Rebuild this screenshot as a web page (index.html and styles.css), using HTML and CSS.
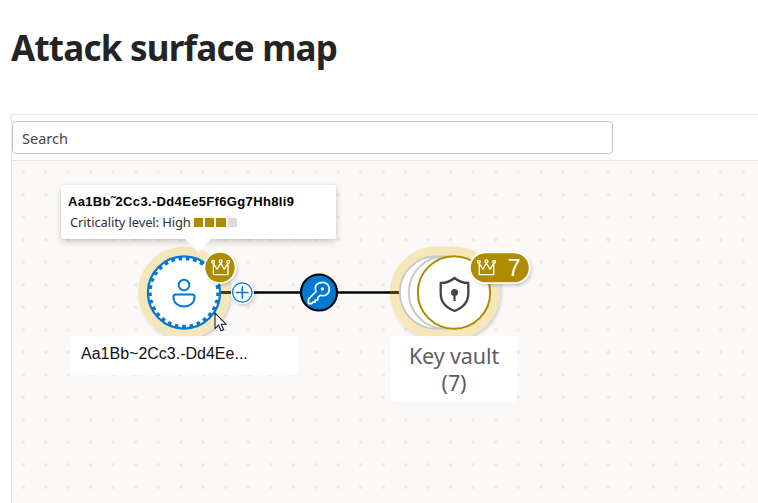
FILE: index.html
```html
<!DOCTYPE html>
<html lang="en">
<head>
<meta charset="utf-8">
<title>Attack surface map</title>
<link rel="stylesheet" href="styles.css">
</head>
<body>
<main class="page">
  <h1 class="title"><span>Attack surface map</span></h1>
  <section class="panel">
    <div class="toolbar"><div class="search"><span>Search</span></div></div>
    <div class="canvas">
      <svg class="graph" width="746" height="342" viewBox="12 161 746 342">
        <defs>
          <filter id="soft" x="-30%" y="-30%" width="160%" height="160%"><feDropShadow dx="1.5" dy="2" stdDeviation="1.5" flood-color="#000" flood-opacity=".18"/></filter>
          <g id="crown" fill="none" stroke="#fff" stroke-width="1.3" stroke-linejoin="round">
            <path d="M-7.3 -4.5V6.800H7.3V-4.5L3.4 1.5L0 -5L-3.4 1.5Z"/>
            <g fill="#ae8c00"><circle cx="-7.6" cy="-6" r="1.4"/><circle cx="0" cy="-6.5" r="1.4"/><circle cx="7.6" cy="-6" r="1.4"/></g>
          </g>
        </defs>
        <circle cx="184" cy="292.5" r="46" fill="#f6e7bb" filter="url(#soft)"/>
        <rect x="390" y="246.500" width="110" height="92" rx="46" fill="#f6e7bb" filter="url(#soft)"/>
        <path d="M221 292.500H400" stroke="#000" stroke-width="2.600"/>
        <path d="M221 292.500H230M390 292.500H399" stroke="#4b3d00" stroke-width="2.600"/>
        <circle cx="184" cy="292.500" r="36.100" fill="#fff" stroke="#0078d4" stroke-width="2.200"/>
        <circle cx="184" cy="292.500" r="34.300" fill="none" stroke="#0078d4" stroke-width="4" pathLength="145" stroke-dasharray="2.500 2.500"/>
        <g fill="none" stroke="#0078d4" stroke-width="1.900">
          <circle cx="184" cy="285" r="5.300"/>
          <path d="M175.700 294.500H192.300Q194.600 294.500 194.600 297C194.600 303 189.500 306.500 184 306.500S173.400 303 173.400 297Q173.400 294.500 175.700 294.500Z"/>
        </g>
        <circle cx="220" cy="267.500" r="16.300" fill="#fff" filter="url(#soft)"/>
        <circle cx="220" cy="267.500" r="14.700" fill="#ae8c00"/>
        <use href="#crown" transform="translate(220.700 267.800)"/>
        <circle cx="242.300" cy="292.500" r="11.500" fill="#fff" filter="url(#soft)"/>
        <circle cx="242.300" cy="292.500" r="9.700" fill="#fff" stroke="#0078d4" stroke-width="1.300"/>
        <path d="M236 292.500H248.600M242.300 286.200V298.800" stroke="#0078d4" stroke-width="1.500"/>
        <circle cx="319" cy="292.500" r="18" fill="#0078d4" stroke="#000" stroke-width="2.200"/>
        <g fill="none" stroke="#fff" stroke-width="1.700" stroke-linejoin="round">
          <path d="M316 291.500C313.500 285 318.500 282.300 322.700 282.300A6.600 6.600 0 0 1 329.300 289C329.300 294.500 324.500 296.700 320.200 295.300L317.800 297.700V300H315.200V302.200H312.800L311.600 303.600H308.500V299.200Z"/>
        </g>
        <circle cx="322.400" cy="289" r="1.700" fill="#fff"/>
        <g fill="#fff" stroke="#c8c8c8" stroke-width="2">
          <circle cx="436" cy="292.500" r="36.200"/><circle cx="445" cy="292.500" r="36.200"/>
          <circle cx="454" cy="292.500" r="36.200" stroke="#ae8c00"/>
        </g>
        <path d="M454.500 278Q460.500 283 468.300 283V293.500C468.300 302 463.500 307.500 454.500 311C445.500 307.500 440.700 302 440.700 293.500V283Q448.500 283 454.500 278Z" fill="none" stroke="#444" stroke-width="2.300" stroke-linejoin="round"/>
        <circle cx="454.500" cy="292.500" r="3.500" fill="#444"/><path d="M454.500 293V301" stroke="#444" stroke-width="2.200"/>
        <rect x="469" y="251.500" width="61.500" height="32.500" rx="16.250" fill="#fff" filter="url(#soft)"/>
        <rect x="470.800" y="253.200" width="58" height="29" rx="14.500" fill="#ae8c00"/>
        <use href="#crown" transform="translate(486.500 267.800)"/>
      </svg>
      <div class="count">7</div>
      <div class="label user"><span>Aa1Bb~2Cc3.-Dd4Ee...</span></div>
      <div class="label vault"><span>Key vault</span><span>(7)</span></div>
      <div class="tip">
        <div class="tip-name"><span>Aa1Bb˜2Cc3.-Dd4Ee5Ff6Gg7Hh8Ii9</span></div>
        <div class="tip-level"><span>Criticality level: High</span><div class="bars"><i></i><i></i><i></i><i class="off"></i></div></div>
      </div>
      <svg class="cursor" width="14" height="21" viewBox="0 0 14 21"><path d="M1 1V16.500L4.600 13.200L7 18.700L9.600 17.600L7.200 12.200H12Z" fill="#fff" stroke="#1a1a2a" stroke-width="1.100"/></svg>
    </div>
  </section>
</main>
</body>
</html>
```
FILE: styles.css
```css
* { box-sizing: border-box; }
body { margin: 0; background: #fff; color: #242424; font-family: "Noto Sans", "Open Sans", sans-serif; overflow: hidden; }
.page { height: 503px; padding-left: 11px; display: flex; flex-direction: column; }
.title { margin: 0; height: 114px; padding-top: 23px; font-size: 35px; line-height: 50px; font-weight: 700; letter-spacing: -.78px; white-space: nowrap; }
.panel { flex: 1; display: flex; flex-direction: column; border: solid #e8e8e8; border-width: 1px 0 0 1px; }
.toolbar { height: 46px; padding-top: 6px; border-bottom: 1px solid #e5e5e5; }
.search { width: 601px; height: 33px; padding-left: 9px; border: 1px solid #c8c8c8; border-radius: 4px; font-size: 14.5px; line-height: 32px; color: #484644; }
.canvas { position: relative; flex: 1; overflow: hidden; background: #faf9f8 radial-gradient(circle, #e9e8e7 1.2px, transparent 2px) 0 0 / 22.5px 22.5px; }
.graph { display: block; }
.count { position: absolute; left: 494px; top: 92px; width: 16px; text-align: center; color: #fff; font: 23.5px/30px "Liberation Sans", sans-serif; }
.label { position: absolute; background: rgba(255,255,255,.92); border-radius: 4px; white-space: nowrap; }
.user { left: 58px; top: 175px; width: 229px; height: 39px; padding-left: 11px; color: #111; font: 16px/36px "Liberation Sans", sans-serif; }
.vault { left: 379px; top: 175px; width: 126px; height: 66px; padding-top: 6px; display: flex; flex-direction: column; align-items: center; color: #605e5c; font-size: 21.5px; line-height: 27px; letter-spacing: -.1px; }
.tip { position: absolute; left: 49px; top: 24px; width: 275px; height: 54px; padding: 7px; background: #fff; border-radius: 2px; box-shadow: 0 3px 7px rgba(0,0,0,.18), 0 0 2px rgba(0,0,0,.12); white-space: nowrap; }
.tip::after { content: ""; position: absolute; left: 124px; top: 54px; width: 26px; height: 13px; background: #fff; clip-path: polygon(0 0, 100% 0, 50% 100%); }
.tip-name { height: 19px; color: #000; font: 700 13px/19px "Liberation Sans", sans-serif; letter-spacing: .34px; }
.tip-level { display: flex; align-items: center; gap: 3px; height: 22px; padding-left: 2px; font-size: 13px; color: #323130; letter-spacing: -.12px; }
.bars { display: flex; gap: 2px; }
.bars i { width: 9.3px; height: 9px; background: #ae8c00; }
.bars .off { background: #dcdcdc; }
.cursor { position: absolute; left: 202px; top: 151px; }
```
